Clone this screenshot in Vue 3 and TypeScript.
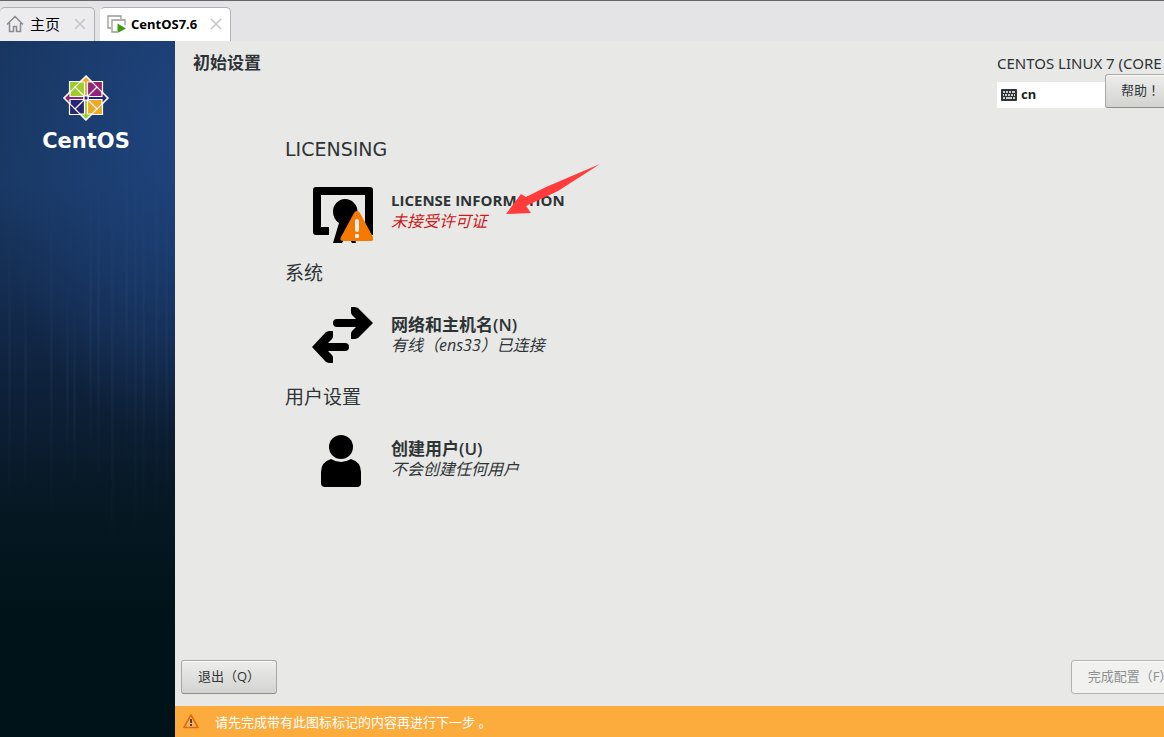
<script setup lang="ts">
import { ref } from 'vue'

interface Spoke {
  section: string
  icon: 'license' | 'network' | 'user'
  title: string
  status: string
  error: boolean
}

const spokes: Spoke[] = [
  { section: 'LICENSING', icon: 'license', title: 'LICENSE INFORMATION', status: '未接受许可证', error: true },
  { section: '系统', icon: 'network', title: '网络和主机名(N)', status: '有线（ens33）已连接', error: false },
  { section: '用户设置', icon: 'user', title: '创建用户(U)', status: '不会创建任何用户', error: false },
]

const streaks = [
  [8, 170, 300], [24, 210, 250], [50, 150, 330], [66, 230, 210], [73, 260, 190], [89, 130, 300],
  [97, 110, 340], [111, 140, 380], [125, 90, 330], [134, 100, 400], [142, 130, 350], [155, 90, 390], [165, 140, 320],
]

const layout = ref('cn')
</script>

<template>
  <div class="window">
    <nav class="tabs" aria-label="标签页">
      <div class="tab home">
        <button class="tab-name" type="button">
          <svg width="18" height="18" viewBox="0 0 18 18" fill="none" stroke="#8b8b8b" stroke-width="1.5">
            <path d="M1 9.5 9 1.5l8 8M3.5 8v8.5h4v-5h3v5h4V8" />
          </svg>
          主页
        </button>
        <button class="close" type="button" aria-label="关闭主页">
          <svg width="12" height="12" viewBox="0 0 12 12"><path d="m1 1 10 10M11 1 1 11" stroke="#c6c6c6" stroke-width="1.6" /></svg>
        </button>
      </div>
      <div class="tab active">
        <button class="tab-name" type="button">
          <svg width="20" height="18" viewBox="0 0 20 18" fill="none">
            <path d="M4 13H1V1h13v3" stroke="#999" stroke-width="1.3" />
            <path d="M10 17H5V5h13v5" stroke="#999" stroke-width="1.3" />
            <path d="M10.500 8.500v9.500l8.500-4.500z" fill="#3f9b0b" />
          </svg>
          CentOS7.6
        </button>
        <button class="close" type="button" aria-label="关闭 CentOS7.6">
          <svg width="12" height="12" viewBox="0 0 12 12"><path d="m1 1 10 10M11 1 1 11" stroke="#c6c6c6" stroke-width="1.6" /></svg>
        </button>
      </div>
    </nav>

    <div class="screen">
      <aside class="sidebar">
        <svg class="streaks" viewBox="0 0 175 696" preserveAspectRatio="none" aria-hidden="true">
          <defs>
            <linearGradient id="fade" x1="0" y1="0" x2="0" y2="1">
              <stop offset="0" stop-color="#3b6a94" stop-opacity="0" />
              <stop offset=".5" stop-color="#3b6a94" stop-opacity=".09" />
              <stop offset="1" stop-color="#3b6a94" stop-opacity="0" />
            </linearGradient>
          </defs>
          <rect v-for="s in streaks" :key="s[0]" :x="s[0]" :y="s[1]" width="3" :height="s[2]" fill="url(#fade)" />
        </svg>
        <div class="brand">
          <svg width="46" height="46" viewBox="0 0 46 46" stroke="#fff" stroke-width="1.2">
            <path d="M6.500 6.500H22V22H6.500z" fill="#9ccd2a" />
            <path d="M24 6.500h15.500V22H24z" fill="#932279" />
            <path d="M6.500 24H22v15.500H6.500z" fill="#262577" />
            <path d="M24 24h15.500v15.500H24z" fill="#efa724" />
            <path d="m23 1 6 6h-4.500v14h-3V7H17z" fill="#efa724" />
            <path d="m45 23-6 6v-4.500H25v-3h14V17z" fill="#262577" />
            <path d="m23 45-6-6h4.500V25h3v14H29z" fill="#9ccd2a" />
            <path d="m1 23 6-6v4.500h14v3H7V29z" fill="#932279" />
            <path d="m23 1 11 11-11 11-11-11zM45 23 34 34 23 23l11-11zM23 45 12 34l11-11 11 11zM1 23l11-11 11 11-11 11z" fill="none" />
            <path d="M21 21h4v4h-4z" fill="#262577" />
          </svg>
          <span class="wordmark">CentOS</span>
        </div>
      </aside>

      <div class="install">
        <header class="header">
          <h1>初始设置</h1>
          <div class="product">
            <span class="release">CENTOS LINUX 7 (CORE</span>
            <div class="tools">
              <label class="keyboard">
                <svg width="16" height="12" viewBox="0 0 16 12">
                  <rect width="16" height="12" rx="1" fill="#2e3436" />
                  <path d="M2 3h2m1 0h2m1 0h2m1 0h3M2 6h1m1 0h2m1 0h2m1 0h2m1 0h1M2 9h2m1 0h6m1 0h2" stroke="#fff" stroke-width="1.6" />
                </svg>
                <input v-model="layout" aria-label="键盘布局" readonly />
              </label>
              <button class="btn help" type="button">帮助！</button>
            </div>
          </div>
        </header>

        <main class="hub">
          <section v-for="s in spokes" :key="s.icon" class="group">
            <h2>{{ s.section }}</h2>
            <button class="spoke" type="button">
              <svg v-if="s.icon === 'license'" width="64" height="64" viewBox="0 0 64 64">
                <path d="M7 4h54q3 0 3 3v45H56V12H12v32h8v8H7q-3 0-3-3V7q0-3 3-3z" />
                <path d="M36 16a12.500 12.500 0 0 1 12.500 12.500q0 8-6.500 11.500l5 20h-4l-5-8-5 8h-9l6-20q-6-4-6-11.500A12.500 12.500 0 0 1 36 16z" />
                <path d="M48 28q2 0 3 2l13 24q1 4-2 4H34q-4 0-2-4l13-24q1-2 3-2z" fill="#f57900" />
                <rect x="46" y="36" width="4" height="13" rx="2" fill="#eee" />
                <rect x="46" y="51" width="4" height="4" rx="1" fill="#eee" />
              </svg>
              <svg v-else-if="s.icon === 'network'" width="64" height="64" viewBox="0 0 64 64">
                <path d="M42 0h4l3 1 15 15-15 15-3 1h-4v-6l1-2 4-4H28a4 4 0 0 1 0-8h19l-4-4-1-2z" />
                <path d="M24 24h-4l-3 1L3 40l14 15 3 1h4v-6l-1-2-4-4h17a4 4 0 0 0 0-8H19l4-4 1-2z" />
              </svg>
              <svg v-else width="64" height="64" viewBox="0 0 64 64">
                <circle cx="32" cy="16" r="12" />
                <path d="M22 28q10 6 20 0 10 3 10 13v11q0 4-4 4H16q-4 0-4-4V41q0-10 10-13z" />
              </svg>
              <span class="text">
                <strong :class="s.icon">{{ s.title }}</strong>
                <em :class="{ error: s.error }">{{ s.status }}</em>
              </span>
            </button>
          </section>
          <svg class="pointer" width="94" height="50" viewBox="0 0 94 50" aria-hidden="true">
            <path d="M94 0 40 23 20 33l-5-3L0 50l25-1-5-7 32-15z" fill="#ff3b3b" />
          </svg>
        </main>

        <footer class="actions">
          <button class="btn quit" type="button">退出（Q）</button>
          <button class="btn finish" type="button" disabled>完成配置（F）</button>
        </footer>

        <div class="notice" role="status">
          <svg width="16" height="15" viewBox="0 0 16 15">
            <path d="M8 1 15 13.500H1z" fill="#f8b26a" stroke="#e66a00" stroke-width="1.6" stroke-linejoin="round" />
            <path d="M7 5h2v4H7zM7 10h2v2H7z" fill="#444" />
          </svg>
          <span>请先完成带有此图标标记的内容再进行下一步 。</span>
        </div>
      </div>
    </div>
  </div>
</template>

<style>
body {
  margin: 0;
  overflow: hidden;
}
</style>

<style scoped>
.window {
  display: flex;
  flex-direction: column;
  height: 100vh;
  overflow: hidden;
  background: #e8e8e6;
  color: #2e3436;
  font-family: "Open Sans", "Noto Sans CJK SC", sans-serif;
}
button {
  margin: 0;
  padding: 0;
  border: 0;
  background: none;
  color: inherit;
  font: inherit;
}
svg {
  flex: none;
  display: block;
}
.tabs {
  display: flex;
  flex: none;
  gap: 5px;
  box-sizing: border-box;
  height: 41px;
  padding-top: 6px;
  border-top: 1px solid #65656b;
  background: #e4e4e7;
}
.tab {
  display: flex;
  align-items: center;
  justify-content: space-between;
  box-sizing: border-box;
  padding: 0 8px 2px 6px;
  border: 1px solid #b0b0b4;
  border-bottom: 0;
  border-radius: 5px 5px 0 0;
  background: #ececee;
}
.home {
  width: 95px;
  border-left: 0;
}
.active {
  width: 131px;
  border-left-color: #fff;
  background: #fff;
}
.tab-name {
  display: flex;
  align-items: center;
  gap: 6px;
  color: #000;
  font-size: 15px;
  line-height: 20px;
  white-space: nowrap;
}
.active .tab-name {
  gap: 4px;
  font-family: "Noto Sans", sans-serif;
  font-size: 13px;
  font-weight: 700;
}
.screen {
  display: flex;
  flex: 1;
  min-height: 0;
}
.sidebar {
  position: relative;
  flex: none;
  width: 175px;
  background:
    radial-gradient(ellipse 190px 310px at 100% 12%, #1e437d 0%, rgba(30, 67, 125, 0) 100%),
    linear-gradient(#18355f 0%, #193863 20%, #142c50 36%, #0e2038 51%, #061823 67%, #001318 84%, #001318 100%);
}
.streaks {
  position: absolute;
  inset: 0;
  width: 100%;
  height: 100%;
}
.brand {
  position: relative;
  display: flex;
  flex-direction: column;
  align-items: center;
  padding: 34px 3px 0 0;
}
.wordmark {
  margin-top: 4px;
  color: #fff;
  font-family: "DejaVu Sans", sans-serif;
  font-size: 21px;
  font-weight: 700;
  line-height: 32px;
}
.install {
  display: flex;
  flex: 1;
  flex-direction: column;
  min-width: 0;
}
.header {
  display: flex;
  justify-content: space-between;
  padding: 11px 0 0 18px;
}
h1 {
  margin: 0;
  font-size: 17px;
  font-weight: 700;
  line-height: 22px;
}
.product {
  flex: none;
  width: 200px;
  margin-right: -33px;
}
.release {
  display: block;
  font-family: "Noto Sans", sans-serif;
  font-size: 15px;
  line-height: 22px;
  white-space: nowrap;
}
.tools {
  display: flex;
  align-items: flex-end;
}
.keyboard {
  display: flex;
  align-items: center;
  gap: 4px;
  box-sizing: border-box;
  width: 108px;
  height: 26px;
  padding-left: 4px;
  background: #fff;
}
.keyboard input {
  width: 70px;
  padding: 0 0 2px;
  border: 0;
  background: none;
  color: #1c1f20;
  font: 700 13px/20px "Noto Sans", sans-serif;
}
.btn {
  box-sizing: border-box;
  height: 34px;
  padding-bottom: 2px;
  border: 1px solid #a8a8a5;
  border-bottom-color: #8d8d8a;
  border-radius: 3px;
  background: linear-gradient(#ededec, #d3d3d0);
  box-shadow: inset 0 1px #fafafa;
  font-size: 13px;
  line-height: 20px;
  white-space: nowrap;
}
.help {
  flex: 1;
  padding-left: 15px;
  font-family: "Noto Sans CJK TC", sans-serif;
  text-align: left;
}
.hub {
  position: relative;
  flex: 1;
  padding: 27px 0 0 110px;
}
.group {
  height: 124px;
}
h2 {
  margin: 0 0 20px;
  font-family: "DejaVu Sans", "Noto Sans CJK SC", sans-serif;
  font-size: 19px;
  font-weight: 400;
  line-height: 28px;
}
.spoke {
  display: flex;
  gap: 18px;
  margin-left: 24px;
  text-align: left;
}
.text {
  display: flex;
  flex-direction: column;
  padding-top: 7px;
  line-height: 21px;
  white-space: nowrap;
}
.text strong {
  font-size: 17px;
  font-weight: 600;
}
.text .license {
  font-size: 15px;
  font-weight: 700;
}
.text em {
  font-size: 16px;
}
.error {
  color: #cc1a1a;
}
.pointer {
  position: absolute;
  left: 331px;
  top: 56px;
}
.actions {
  display: flex;
  flex: none;
  justify-content: space-between;
  padding: 0 0 12px 6px;
}
.quit {
  width: 96px;
}
.finish {
  width: 118px;
  margin-right: -25px;
  border-color: #b3b3b0;
  background: #f1f1f0;
  color: #8d9091;
}
.notice {
  display: flex;
  flex: none;
  align-items: center;
  gap: 16px;
  height: 31px;
  padding-left: 8px;
  background: #fbac3d;
  color: #fff;
  font-size: 13px;
  line-height: 20px;
}
</style>
